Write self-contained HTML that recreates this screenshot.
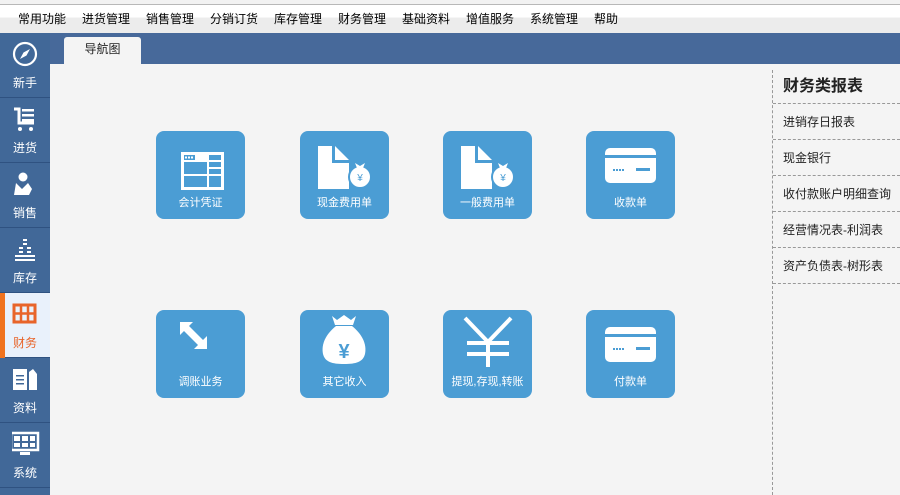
<!DOCTYPE html>
<html><head><meta charset="utf-8"><style>
*{margin:0;padding:0;box-sizing:border-box}
body{width:900px;height:495px;overflow:hidden;background:#f4f4f4;font-family:"Liberation Sans","Noto Sans CJK SC",sans-serif;position:relative}
.menu{position:absolute;left:0;top:0;width:900px;height:33px;background:linear-gradient(#f2f2f2 0,#f2f2f2 4px,#fff 5px,#fff 17px,#ececec 18px,#ececec 33px);}
.menu:before{content:"";position:absolute;left:0;top:4px;width:900px;height:1px;background:#b8b8b8}
.menu span{position:absolute;top:10px;font-size:12px;color:#000}
.band{position:absolute;left:0;top:33px;width:900px;height:31px;background:#47699a}
.tab{position:absolute;left:64px;top:37px;width:77px;height:27px;background:#f4f4f4;border-radius:3px 3px 0 0;font-size:12px;text-align:center;line-height:24px;color:#222}
.side{position:absolute;left:0;top:33px;width:50px;height:462px;background:#416898}
.it{position:absolute;left:0;width:50px;height:65px;border-bottom:1px solid #2f5281;color:#fff;font-size:12px;text-align:center}
.it .lb{position:absolute;left:0;right:0;bottom:6px}
.it svg{position:absolute;left:12px;top:8px}
.act{background:#e9f1fb;color:#e8642a}
.act:before{content:"";position:absolute;left:0;top:0;width:5px;height:65px;background:#f0731e}
.tile{position:absolute;width:89px;height:88px;background:#4b9dd4;border-radius:8px;color:#fff;font-size:11px;text-align:center}
.tile .t{position:absolute;left:0;right:0;bottom:9px}
.tile svg{position:absolute;left:0;top:0}
.rp{position:absolute;left:772px;top:70px;width:128px;height:425px;border-left:1px dashed #999}
.rp div{height:36px;border-bottom:1px dashed #999;font-size:12px;line-height:36px;padding-left:10px;color:#222;white-space:nowrap}
.rp .h{height:34px;font-size:16px;font-weight:bold;line-height:34px}
</style></head><body>
<div class="menu">
<span style="left:18px">常用功能</span><span style="left:82px">进货管理</span><span style="left:146px">销售管理</span><span style="left:210px">分销订货</span><span style="left:274px">库存管理</span><span style="left:338px">财务管理</span><span style="left:402px">基础资料</span><span style="left:466px">增值服务</span><span style="left:530px">系统管理</span><span style="left:594px">帮助</span>
</div>
<div class="band"></div>
<div class="tab">导航图</div>
<div class="side">
<div class="it" style="top:0"><svg width="26" height="26" viewBox="0 0 26 26"><circle cx="13" cy="13" r="11" fill="none" stroke="#fff" stroke-width="2.2"/><path d="M18 8 L14.5 14.5 L8 18 L11.5 11.5Z" fill="#fff"/></svg><span class="lb">新手</span></div>
<div class="it" style="top:65px"><svg width="26" height="28" viewBox="0 0 26 28"><path d="M2 3h5v14h15" fill="none" stroke="#fff" stroke-width="3"/><rect x="10" y="3" width="12" height="2.5" fill="#fff"/><rect x="10" y="8" width="12" height="2.5" fill="#fff"/><rect x="10" y="13" width="12" height="2.5" fill="#fff"/><circle cx="8" cy="23" r="2" fill="#fff"/><circle cx="19" cy="23" r="2" fill="#fff"/></svg><span class="lb">进货</span></div>
<div class="it" style="top:130px"><svg width="26" height="28" viewBox="0 0 26 28"><circle cx="11" cy="6" r="4.5" fill="#fff"/><path d="M2 24 L4 12 L10 18 L16 12 L20 18 L17 24Z" fill="#fff"/></svg><span class="lb">销售</span></div>
<div class="it" style="top:195px"><svg width="26" height="28" viewBox="0 0 26 28" fill="#fff"><rect x="11" y="3" width="4" height="2"/><rect x="11" y="7" width="4" height="2"/><rect x="7" y="11" width="4" height="2"/><rect x="15" y="11" width="4" height="2"/><rect x="7" y="15" width="4" height="2"/><rect x="15" y="15" width="4" height="2"/><rect x="3" y="19" width="20" height="2"/><rect x="3" y="23" width="20" height="2"/></svg><span class="lb">库存</span></div>
<div class="it act" style="top:260px"><svg width="26" height="26" viewBox="0 0 26 26"><rect x="2" y="4" width="21" height="17" fill="none" stroke="#e8642a" stroke-width="3"/><path d="M2 12.5h21M9 4v17M16 4v17" stroke="#e8642a" stroke-width="2.5"/></svg><span class="lb">财务</span></div>
<div class="it" style="top:325px"><svg width="26" height="28" viewBox="0 0 26 28" fill="#fff"><path d="M1 3h14v21H1z"/><path d="M17 6l4-3 4 5v16h-8z"/><rect x="4" y="9" width="8" height="1.5" fill="#416898"/><rect x="4" y="13" width="8" height="1.5" fill="#416898"/><rect x="4" y="17" width="8" height="1.5" fill="#416898"/></svg><span class="lb">资料</span></div>
<div class="it" style="top:390px"><svg width="30" height="28" viewBox="0 0 30 28"><rect x="-1" y="2" width="27" height="17" fill="none" stroke="#fff" stroke-width="2.5"/><path d="M2 5h6v5H2zM10 5h6v5h-6zM18 5h5v5h-5zM2 12h6v4H2zM10 12h6v4h-6zM18 12h5v4h-5z" fill="#fff"/><rect x="8" y="21" width="10" height="3" fill="#fff"/></svg><span class="lb">系统</span></div>
</div>

<div class="tile" style="left:156px;top:131px"><svg width="89" height="60"><rect x="25" y="21" width="43" height="38" fill="#fff"/><path d="M28 24h11v5H28z" fill="#4b9dd4"/><path d="M29 25.5h2v2h-2zM32 25.5h2v2h-2zM35 25.5h2v2h-2z" fill="#fff"/><rect x="28" y="31" width="23" height="12" fill="#4b9dd4"/><rect x="28" y="45" width="23" height="11" fill="#4b9dd4"/><rect x="53" y="24" width="12" height="5" fill="#4b9dd4"/><rect x="53" y="31" width="12" height="5" fill="#4b9dd4"/><rect x="53" y="38" width="12" height="5" fill="#4b9dd4"/><rect x="53" y="45" width="12" height="11" fill="#4b9dd4"/></svg><span class="t">会计凭证</span></div>

<div class="tile" style="left:300px;top:131px"><svg width="89" height="60"><path d="M18 15h14v43H18z" fill="#fff"/><path d="M35 15l14 14H35z" fill="#fff"/><path d="M32 32h17v26H32z" fill="#fff"/><circle cx="60" cy="46" r="11" fill="#fff" stroke="#4b9dd4" stroke-width="2"/><path d="M55 32l5 3 5-3-2 5h-6z" fill="#fff"/><text x="60" y="50" font-size="10" fill="#4b9dd4" text-anchor="middle">¥</text></svg><span class="t">现金费用单</span></div>

<div class="tile" style="left:443px;top:131px"><svg width="89" height="60"><path d="M18 15h14v43H18z" fill="#fff"/><path d="M35 15l14 14H35z" fill="#fff"/><path d="M32 32h17v26H32z" fill="#fff"/><circle cx="60" cy="46" r="11" fill="#fff" stroke="#4b9dd4" stroke-width="2"/><path d="M55 32l5 3 5-3-2 5h-6z" fill="#fff"/><text x="60" y="50" font-size="10" fill="#4b9dd4" text-anchor="middle">¥</text></svg><span class="t">一般费用单</span></div>

<div class="tile" style="left:586px;top:131px"><svg width="89" height="60"><rect x="19" y="17" width="51" height="35" rx="5" fill="#fff"/><rect x="19" y="24" width="51" height="3" fill="#4b9dd4"/><path d="M27 38h2v2h-2zM30 38h2v2h-2zM33 38h2v2h-2zM36 38h2v2h-2z" fill="#4b9dd4"/><rect x="50" y="37" width="14" height="3" fill="#4b9dd4"/></svg><span class="t">收款单</span></div>

<div class="tile" style="left:156px;top:310px"><svg width="89" height="60"><path d="M24 12h13l-4 4 14 14 4-4v13H38l4-4-14-14-4 4z" fill="#fff"/></svg><span class="t">调账业务</span></div>

<div class="tile" style="left:300px;top:310px"><svg width="89" height="60"><path d="M32 6l5 4 7-5 7 5 5-4-3 9H35z" fill="#fff"/><path d="M36 16h16c10 8 15 18 13 28-2 8-9 10-21 10s-19-2-21-10c-2-10 3-20 13-28z" fill="#fff"/><text x="44" y="48" font-size="20" fill="#4b9dd4" text-anchor="middle" font-weight="bold">¥</text></svg><span class="t">其它收入</span></div>

<div class="tile" style="left:443px;top:310px"><svg width="89" height="60"><path d="M22 8l23 24 23-24" fill="none" stroke="#fff" stroke-width="4"/><path d="M45 30v27M24 33h42M24 44h42" stroke="#fff" stroke-width="4"/></svg><span class="t">提现,存现,转账</span></div>

<div class="tile" style="left:586px;top:310px"><svg width="89" height="60"><rect x="19" y="17" width="51" height="35" rx="5" fill="#fff"/><rect x="19" y="24" width="51" height="3" fill="#4b9dd4"/><path d="M27 38h2v2h-2zM30 38h2v2h-2zM33 38h2v2h-2zM36 38h2v2h-2z" fill="#4b9dd4"/><rect x="50" y="37" width="14" height="3" fill="#4b9dd4"/></svg><span class="t">付款单</span></div>

<div class="rp">
<div class="h">财务类报表</div>
<div>进销存日报表</div>
<div>现金银行</div>
<div>收付款账户明细查询</div>
<div>经营情况表-利润表</div>
<div>资产负债表-树形表</div>
</div>
</body></html>
